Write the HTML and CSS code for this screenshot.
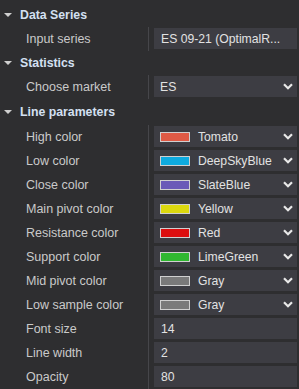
FILE: index.html
```html
<!DOCTYPE html>
<html>
<head>
<meta charset="utf-8">
<link rel="stylesheet" href="styles.css">
</head>
<body>
<div class="grid">
  <div class="section"><span class="tri"></span><span class="title">Data Series</span></div>
  <div class="row"><div class="label">Input series</div><div class="value"><div class="box">ES 09-21 (OptimalR...</div></div></div>

  <div class="section"><span class="tri"></span><span class="title">Statistics</span></div>
  <div class="row"><div class="label">Choose market</div><div class="value"><div class="box select"><span class="txt">ES</span><svg class="chev" viewBox="0 0 10 7"><path d="M1 1.2 L5 5.2 L9 1.2" fill="none" stroke="#e8e8e8" stroke-width="2.2"/></svg></div></div></div>

  <div class="section tall"><span class="tri"></span><span class="title">Line parameters</span></div>
  <div class="row"><div class="label">High color</div><div class="value"><div class="box select"><span class="swatch" style="background:#e05a45"></span><span class="txt">Tomato</span><svg class="chev" viewBox="0 0 10 7"><path d="M1 1.2 L5 5.2 L9 1.2" fill="none" stroke="#e8e8e8" stroke-width="2.2"/></svg></div></div></div>
  <div class="row"><div class="label">Low color</div><div class="value"><div class="box select"><span class="swatch" style="background:#0eaadf"></span><span class="txt">DeepSkyBlue</span><svg class="chev" viewBox="0 0 10 7"><path d="M1 1.2 L5 5.2 L9 1.2" fill="none" stroke="#e8e8e8" stroke-width="2.2"/></svg></div></div></div>
  <div class="row"><div class="label">Close color</div><div class="value"><div class="box select"><span class="swatch" style="background:#6a5ab8"></span><span class="txt">SlateBlue</span><svg class="chev" viewBox="0 0 10 7"><path d="M1 1.2 L5 5.2 L9 1.2" fill="none" stroke="#e8e8e8" stroke-width="2.2"/></svg></div></div></div>
  <div class="row"><div class="label">Main pivot color</div><div class="value"><div class="box select"><span class="swatch" style="background:#dcd80e"></span><span class="txt">Yellow</span><svg class="chev" viewBox="0 0 10 7"><path d="M1 1.2 L5 5.2 L9 1.2" fill="none" stroke="#e8e8e8" stroke-width="2.2"/></svg></div></div></div>
  <div class="row"><div class="label">Resistance color</div><div class="value"><div class="box select"><span class="swatch" style="background:#dc0e0e"></span><span class="txt">Red</span><svg class="chev" viewBox="0 0 10 7"><path d="M1 1.2 L5 5.2 L9 1.2" fill="none" stroke="#e8e8e8" stroke-width="2.2"/></svg></div></div></div>
  <div class="row"><div class="label">Support color</div><div class="value"><div class="box select"><span class="swatch" style="background:#30b830"></span><span class="txt">LimeGreen</span><svg class="chev" viewBox="0 0 10 7"><path d="M1 1.2 L5 5.2 L9 1.2" fill="none" stroke="#e8e8e8" stroke-width="2.2"/></svg></div></div></div>
  <div class="row"><div class="label">Mid pivot color</div><div class="value"><div class="box select"><span class="swatch" style="background:#7a7a7a"></span><span class="txt">Gray</span><svg class="chev" viewBox="0 0 10 7"><path d="M1 1.2 L5 5.2 L9 1.2" fill="none" stroke="#e8e8e8" stroke-width="2.2"/></svg></div></div></div>
  <div class="row"><div class="label">Low sample color</div><div class="value"><div class="box select"><span class="swatch" style="background:#7a7a7a"></span><span class="txt">Gray</span><svg class="chev" viewBox="0 0 10 7"><path d="M1 1.2 L5 5.2 L9 1.2" fill="none" stroke="#e8e8e8" stroke-width="2.2"/></svg></div></div></div>
  <div class="row"><div class="label">Font size</div><div class="value"><div class="box">14</div></div></div>
  <div class="row"><div class="label">Line width</div><div class="value"><div class="box">2</div></div></div>
  <div class="row"><div class="label">Opacity</div><div class="value"><div class="box">80</div></div></div>
</div>
</body>
</html>
```
FILE: styles.css
```css
html, body {
  margin: 0;
  padding: 0;
  background: #2e2e30;
}
body {
  font-family: "Liberation Sans", Arial, sans-serif;
  font-size: 12px;
  color: #c8c8c8;
}
.grid {
  padding-top: 3px;
  display: flex;
  flex-direction: column;
}
.section {
  height: 24px;
  display: flex;
  align-items: center;
}
.section.tall {
  height: 26px;
}
.tri {
  width: 0;
  height: 0;
  margin-left: 4px;
  border-left: 4px solid transparent;
  border-right: 4px solid transparent;
  border-top: 4px solid #cfcfcf;
}
.title {
  margin-left: 8px;
  font-weight: bold;
  font-size: 12.3px;
  color: #d4e0f2;
}
.row {
  height: 24px;
  display: flex;
}
.label {
  width: 149px;
  box-sizing: border-box;
  padding-left: 26px;
  display: flex;
  align-items: center;
  border-right: 1px solid #46464a;
  color: #cacaca;
  font-size: 12.5px;
}
.value {
  flex: 1;
  padding: 1px 2px 2px 5px;
}
.box {
  height: 21px;
  background: #3d3d43;
  color: #e2e2e2;
  display: flex;
  align-items: center;
  padding-left: 7px;
  font-size: 12.2px;
}
.select {
  padding-left: 6px;
}
.swatch {
  width: 28px;
  height: 8px;
  border: 1px solid #d0d0d0;
  margin-right: 8px;
}
.txt {
  flex: 1;
}
.chev {
  width: 10px;
  height: 7px;
  margin-right: 4px;
}
```
